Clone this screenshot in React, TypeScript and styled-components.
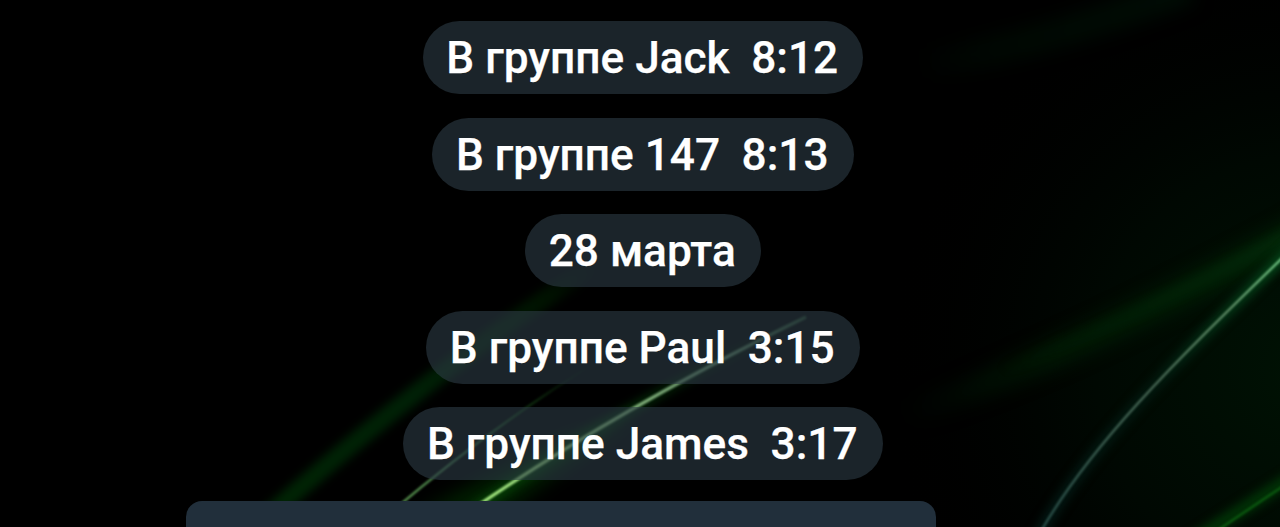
import { FC } from "react";
import styled, { createGlobalStyle } from "styled-components";

const events = [
  { text: "В группе Jack", time: "8:12" },
  { text: "В группе 147", time: "8:13" },
  { text: "28 марта" },
  { text: "В группе Paul", time: "3:15" },
  { text: "В группе James", time: "3:17" },
];

const Blur: FC<{ id: string; size: number }> = ({ id, size }) => (
  <filter
    id={id}
    filterUnits="userSpaceOnUse"
    colorInterpolationFilters="sRGB"
    x="-50"
    y="-50"
    width="1380"
    height="627"
  >
    <feGaussianBlur stdDeviation={size} />
  </filter>
);

const Wallpaper: FC = () => (
  <WallpaperSvg viewBox="0 0 1280 527" preserveAspectRatio="none" aria-hidden>
    <defs>
      <Blur id="haze" size={9} />
      <Blur id="glow" size={5} />
      <Blur id="fine" size={0.8} />
      <radialGradient id="ambient" gradientUnits="userSpaceOnUse" cx="1310" cy="370" r="430">
        <stop offset="0" stopColor="#001204" />
        <stop offset="0.5" stopColor="#000802" />
        <stop offset="1" stopColor="#000" stopOpacity="0" />
      </radialGradient>
      <linearGradient id="leftBand" gradientUnits="userSpaceOnUse" x1="270" y1="520" x2="600" y2="260">
        <stop offset="0" stopColor="#002404" />
        <stop offset="0.45" stopColor="#002106" />
        <stop offset="0.85" stopColor="#001200" />
        <stop offset="1" stopColor="#001000" stopOpacity="0" />
      </linearGradient>
      <linearGradient id="thinRay" gradientUnits="userSpaceOnUse" x1="405" y1="501" x2="600" y2="360">
        <stop offset="0" stopColor="#5c9a52" />
        <stop offset="0.3" stopColor="#3c7044" />
        <stop offset="0.6" stopColor="#123812" />
        <stop offset="1" stopColor="#061806" stopOpacity="0" />
      </linearGradient>
      <linearGradient id="brightRay" gradientUnits="userSpaceOnUse" x1="483" y1="501" x2="806" y2="316">
        <stop offset="0" stopColor="#a6ec80" />
        <stop offset="0.5" stopColor="#7fae79" />
        <stop offset="0.75" stopColor="#5f8564" />
        <stop offset="1" stopColor="#24442a" />
      </linearGradient>
      <linearGradient id="brightGlow" gradientUnits="userSpaceOnUse" x1="483" y1="501" x2="806" y2="316">
        <stop offset="0" stopColor="#064406" />
        <stop offset="0.5" stopColor="#032c07" />
        <stop offset="1" stopColor="#001800" stopOpacity="0" />
      </linearGradient>
      <linearGradient id="topBand" gradientUnits="userSpaceOnUse" x1="920" y1="75" x2="1180" y2="0">
        <stop offset="0" stopColor="#000a03" stopOpacity="0" />
        <stop offset="0.3" stopColor="#000802" />
        <stop offset="1" stopColor="#000c04" />
      </linearGradient>
      <linearGradient id="rightBand" gradientUnits="userSpaceOnUse" x1="900" y1="415" x2="1280" y2="235">
        <stop offset="0" stopColor="#001404" stopOpacity="0" />
        <stop offset="0.4" stopColor="#001904" />
        <stop offset="1" stopColor="#002406" />
      </linearGradient>
      <linearGradient id="rightCore" gradientUnits="userSpaceOnUse" x1="1000" y1="370" x2="1280" y2="235">
        <stop offset="0" stopColor="#002006" stopOpacity="0" />
        <stop offset="1" stopColor="#03280a" />
      </linearGradient>
      <linearGradient id="arc" gradientUnits="userSpaceOnUse" x1="1043" y1="527" x2="1280" y2="260">
        <stop offset="0" stopColor="#2a504a" />
        <stop offset="0.5" stopColor="#4c6b58" />
        <stop offset="0.8" stopColor="#66926c" />
        <stop offset="1" stopColor="#78cc8a" />
      </linearGradient>
      <linearGradient id="arcGlow" gradientUnits="userSpaceOnUse" x1="1043" y1="527" x2="1280" y2="260">
        <stop offset="0" stopColor="#021814" />
        <stop offset="0.5" stopColor="#021a10" />
        <stop offset="1" stopColor="#04481a" />
      </linearGradient>
    </defs>
    <rect width="1280" height="527" fill="#000" />
    <rect width="1280" height="527" fill="url(#ambient)" />

    <g fill="none">
      <path d="M920 66Q1060 40 1190-12" stroke="url(#topBand)" strokeWidth="30" filter="url(#haze)" />
      <path d="M890 421Q1080 352 1320 220" stroke="url(#rightBand)" strokeWidth="26" filter="url(#haze)" />
      <path d="M1000 370Q1160 307 1310 223" stroke="url(#rightCore)" strokeWidth="9" filter="url(#glow)" />
      <path d="M1036 540C1092 438 1196 342 1310 231" stroke="url(#arcGlow)" strokeWidth="11" filter="url(#glow)" />
      <path d="M1036 540C1092 438 1196 342 1310 231" stroke="url(#arc)" strokeWidth="2.2" filter="url(#fine)" />
      <path d="M1185 546L1310 466" stroke="#003206" strokeWidth="13" filter="url(#glow)" />
      <path d="M1203 540L1310 468" stroke="#0a570f" strokeWidth="2.5" filter="url(#fine)" />

      <path d="M258 525Q430 372 600 262" stroke="url(#leftBand)" strokeWidth="18" filter="url(#glow)" />
      <path d="M415 515L500 515L640 412L560 440Z" fill="#002400" fillOpacity="0.85" filter="url(#haze)" />
      <path d="M390 513Q500 420 600 360" stroke="url(#thinRay)" strokeWidth="2.2" filter="url(#fine)" />
      <path d="M470 513Q620 406 806 318" stroke="url(#brightGlow)" strokeWidth="9" filter="url(#glow)" />
      <path d="M470 511Q620 408 806 317" stroke="url(#brightRay)" strokeWidth="3.2" filter="url(#fine)" />
    </g>
  </WallpaperSvg>
);

const App: FC = () => (
  <Chat>
    <GlobalStyle />
    <Wallpaper />
    <Feed>
      {events.map(({ text, time }) => (
        <Notice key={text}>
          <span>{text}</span>
          {time && <time>{time}</time>}
        </Notice>
      ))}
    </Feed>
    <Message />
  </Chat>
);

export default App;

const GlobalStyle = createGlobalStyle`
  body {
    margin: 0;
    background: #000;
    font-family: Roboto, "Noto Sans", sans-serif;
  }
`;

const Chat = styled.main`
  position: relative;
  box-sizing: border-box;
  width: 1280px;
  height: 527px;
  padding-top: 21px;
  overflow: hidden;
`;

const WallpaperSvg = styled.svg`
  position: absolute;
  inset: 0;
  width: 100%;
  height: 100%;
  z-index: -1;
`;

const Feed = styled.div`
  display: flex;
  flex-direction: column;
  align-items: center;
  gap: 23.5px;
  padding-left: 6px;
`;

const Notice = styled.div`
  display: flex;
  gap: 21.5px;
  box-sizing: border-box;
  height: 73px;
  padding: 0 25px 0 23.5px;
  border-radius: 37px;
  background: rgba(45, 60, 70, 0.6);
  color: #fff;
  font-size: 44.2px;
  font-weight: 500;
  line-height: 74px;
  white-space: pre;
  -webkit-text-stroke: 0.25px #fff;
`;

const Message = styled.section`
  width: 750px;
  height: 80px;
  margin: 21px 0 0 186px;
  border-radius: 16px;
  background: #212f3b;
`;
